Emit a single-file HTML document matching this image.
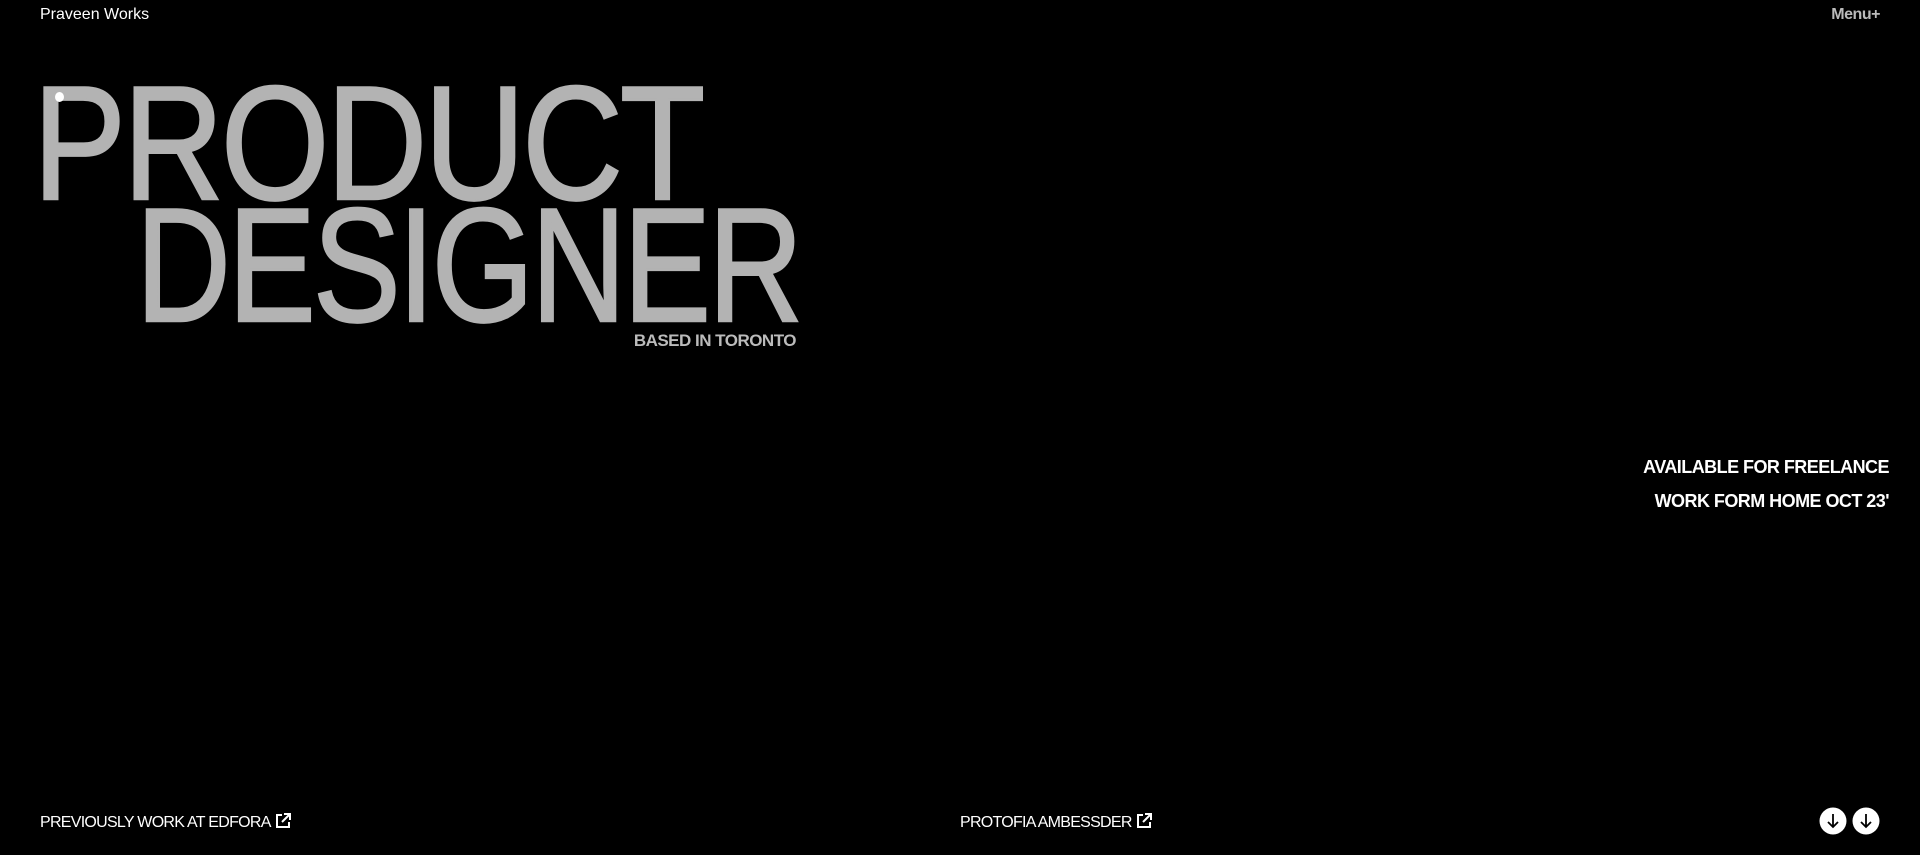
<!DOCTYPE html>
<html><head><meta charset="utf-8"><style>
html,body{margin:0;padding:0;background:#000;width:1920px;height:855px;overflow:hidden;font-family:"Liberation Sans",sans-serif;position:relative}
.a{position:absolute;white-space:nowrap}
.big{color:#b3b3b3;font-size:162px;line-height:1;letter-spacing:-0.02em;transform-origin:left top;-webkit-text-stroke:2.5px #b3b3b3}
.b{font-weight:bold;letter-spacing:-0.03em}
.ic{display:inline-block;vertical-align:-2px;margin-left:4px}
</style></head><body>
<div class="a" style="left:40px;top:6px;font-size:16px;color:#fff">Praveen Works</div>
<div class="a b" style="right:40px;top:6px;font-size:16px;color:#bbb">Menu+</div>
<div class="a big" style="left:33px;top:63px;transform:scaleX(0.86)">PRODUCT</div>
<div class="a big" style="left:136px;top:185px;transform:scaleX(0.81)">DESIGNER</div>
<div style="position:absolute;left:55px;top:92px;width:9px;height:10px;border-radius:50%;background:#fff"></div>
<div class="a b" style="right:1124px;top:331px;font-size:17px;color:#bbb">BASED IN TORONTO</div>
<div class="a b" style="right:31px;top:450px;font-size:18px;color:#fff;text-align:right;line-height:34px">AVAILABLE FOR FREELANCE<br>WORK FORM HOME OCT 23'</div>
<div class="a" style="left:40px;top:813px;font-size:16px;color:#fff;letter-spacing:-0.045em">PREVIOUSLY WORK AT EDFORA<svg class="ic" width="16" height="16" viewBox="0 0 16 16" fill="none" stroke="#fff" stroke-width="2"><path d="M7 2H2v12h12V9M9 1h6v6M15 1L7 9"/></svg></div>
<div class="a" style="left:960px;top:813px;font-size:16px;color:#fff;letter-spacing:-0.045em">PROTOFIA AMBESSDER<svg class="ic" width="16" height="16" viewBox="0 0 16 16" fill="none" stroke="#fff" stroke-width="2"><path d="M7 2H2v12h12V9M9 1h6v6M15 1L7 9"/></svg></div>
<svg class="a" style="left:1819px;top:807px" width="62" height="28" viewBox="0 0 62 28"><circle cx="14" cy="14" r="13.5" fill="#fff"/><circle cx="47" cy="14" r="13.5" fill="#fff"/><path d="M14 7v13M9 15l5 5 5-5M47 7v13M42 15l5 5 5-5" stroke="#000" stroke-width="1.8" fill="none"/></svg>
</body></html>
